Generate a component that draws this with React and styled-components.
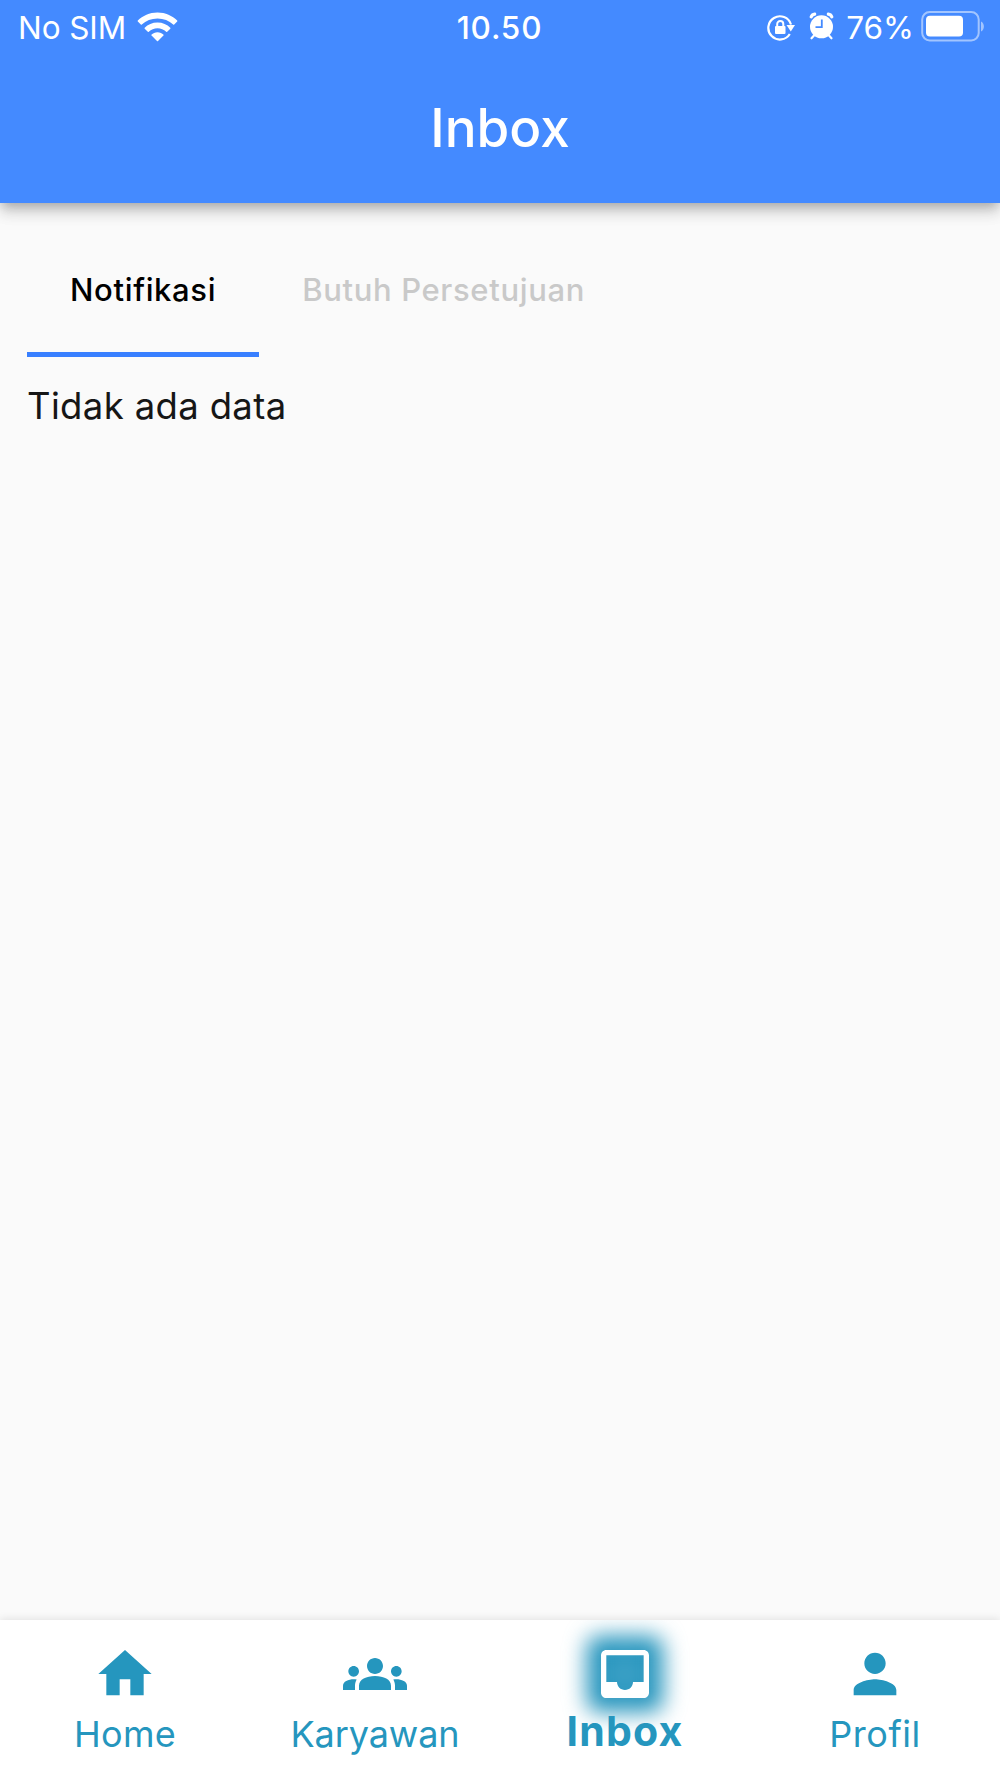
import React, { useState } from "react";
import styled, { createGlobalStyle, css } from "styled-components";

const GlobalStyle = createGlobalStyle`
  * {
    box-sizing: border-box;
  }
  body {
    margin: 0;
    background: #fafafa;
    font-family: Inter, "Liberation Sans", sans-serif;
  }
`;

const Screen = styled.div`
  display: flex;
  flex-direction: column;
  width: 1000px;
  height: 1778px;
  overflow: hidden;
  background: #fafafa;
`;

const Header = styled.header`
  height: 203px;
  background: #448aff;
  color: #fff;
  box-shadow: 0 5px 10px -3px rgba(0, 0, 0, 0.2),
    0 10px 13px 0 rgba(0, 0, 0, 0.12), 0 3px 22px 0 rgba(0, 0, 0, 0.1);
`;

const StatusBar = styled.div`
  display: grid;
  grid-template-columns: 1fr auto 1fr;
  height: 54px;
  padding: 0 16px 0 18px;
  font-size: 31.5px;
  line-height: 55px;
`;

const StatusGroup = styled.div`
  display: flex;
  justify-content: ${({ $end }) => ($end ? "flex-end" : "flex-start")};

  svg {
    display: block;
    flex: none;
  }
`;

const Carrier = styled.span`
  margin-right: 11px;
  letter-spacing: -0.1px;
`;

const WifiIcon = styled.svg`
  margin-top: 12px;
`;

const Clock = styled.span`
  margin-right: 3px;
  font-weight: 550;
  letter-spacing: 0.8px;
`;

const LockIcon = styled.svg`
  margin: 14px 14px 0 0;
`;

const AlarmIcon = styled.svg`
  margin: 12px 12px 0 0;
`;

const Percent = styled.span`
  margin-right: 6px;
`;

const BatteryIcon = styled.svg`
  margin-top: 10px;
`;

const Title = styled.h1`
  margin: 0;
  padding-top: 42px;
  font-size: 53px;
  font-weight: 550;
  line-height: 64px;
  text-align: center;
`;

const Content = styled.main`
  flex: 1;
  padding: 46px 27px 0;
`;

const Tabs = styled.div`
  display: flex;
`;

const Tab = styled.button`
  height: 108px;
  padding: 0 43px 22px;
  border: 0;
  border-bottom: 5px solid transparent;
  background: none;
  color: #c9c9c9;
  font-family: inherit;
  font-size: 31px;
  font-weight: 500;
  line-height: 40px;
  letter-spacing: 0.65px;
  white-space: nowrap;

  ${({ $active }) =>
    $active &&
    css`
      color: #000;
      border-bottom-color: #387fff;
    `}
`;

const EmptyText = styled.p`
  margin: 0;
  padding-top: 26px;
  color: #161616;
  font-size: 36.5px;
  line-height: 46px;
  letter-spacing: 0.35px;
`;

const BottomNav = styled.nav`
  display: grid;
  grid-template-columns: repeat(4, 1fr);
  height: 158px;
  overflow: hidden;
  background: #fff;
  box-shadow: 0 -1px 8px rgba(0, 0, 0, 0.1);
`;

const NavItem = styled.button`
  display: flex;
  flex-direction: column;
  align-items: center;
  padding: 22px 0 0;
  border: 0;
  background: none;
  color: #2596be;
  font-family: inherit;
`;

const IconWrap = styled.span`
  position: relative;
  width: 64px;
  height: 64px;

  ${({ $active }) =>
    $active &&
    css`
      color: #fff;

      &::before {
        content: "";
        position: absolute;
        inset: -6px;
        border-radius: 12px;
        background: radial-gradient(circle, #4ba8cc 0%, #2092bb 55%);
        filter: blur(11px);
      }
    `}
`;

const NavIcon = styled.svg`
  position: relative;
  display: block;
  width: 64px;
  height: 64px;
  fill: currentColor;
`;

const NavLabel = styled.span`
  position: relative;
  margin-top: 6px;
  font-size: 36px;
  font-weight: 400;
  line-height: 44px;
  letter-spacing: ${({ $spacing }) => $spacing};

  ${({ $active }) =>
    $active &&
    css`
      margin-top: 3px;
      font-size: 41px;
      font-weight: 700;
    `}
`;

const tabs = ["Notifikasi", "Butuh Persetujuan"];

const navItems = [
  {
    label: "Home",
    spacing: "0.3px",
    path: "M10 20v-6h4v6h5v-8h3L12 3 2 12h3v8z",
  },
  {
    label: "Karyawan",
    spacing: "-0.1px",
    path: "M12 12.75c1.63 0 3.07.39 4.24.9 1.08.48 1.76 1.56 1.76 2.73V18H6v-1.61c0-1.18.68-2.26 1.76-2.73 1.17-.52 2.61-.91 4.24-.91zM4 13c1.1 0 2-.9 2-2s-.9-2-2-2-2 .9-2 2 .9 2 2 2zm1.13 1.1C4.76 14.04 4.39 14 4 14c-.99 0-1.93.21-2.78.58C.48 14.9 0 15.62 0 16.43V18h4.5v-1.61c0-.83.23-1.61.63-2.29zM20 13c1.1 0 2-.9 2-2s-.9-2-2-2-2 .9-2 2 .9 2 2 2zm4 3.43c0-.81-.48-1.53-1.22-1.85-.85-.37-1.79-.58-2.78-.58-.39 0-.76.04-1.13.1.4.68.63 1.46.63 2.29V18H24v-1.57zM12 6c1.66 0 3 1.34 3 3s-1.34 3-3 3-3-1.34-3-3 1.34-3 3-3z",
  },
  {
    label: "Inbox",
    spacing: "1.2px",
    path: "M19 3H4.99c-1.11 0-1.98.89-1.98 2L3 19c0 1.1.88 2 1.99 2H19c1.1 0 2-.9 2-2V5c0-1.11-.9-2-2-2zm0 12h-4c0 1.66-1.35 3-3 3s-3-1.34-3-3H4.99V5H19v10z",
  },
  {
    label: "Profil",
    spacing: "0.5px",
    path: "M12 12c2.21 0 4-1.79 4-4s-1.79-4-4-4-4 1.79-4 4 1.79 4 4 4zm0 2c-2.67 0-8 1.34-8 4v2h16v-2c0-2.66-5.33-4-8-4z",
  },
];

const Status = () => (
  <StatusBar>
    <StatusGroup>
      <Carrier>No SIM</Carrier>
      <WifiIcon width="41" height="30" viewBox="0 0 41 30" fill="#fff">
        <path d="M20.5 .5C28.500 .5 35.300 3.700 40.200 8.600Q40.600 9.100 40.200 9.600L37.200 12.600Q36.700 13 36.200 12.600C32 8.600 26.700 6.400 20.500 6.400S9 8.600 4.800 12.600Q4.300 13 3.800 12.600L.8 9.600Q.4 9.100 .8 8.600C5.700 3.700 12.500 .5 20.500 .5Z" />
        <path d="M20.500 10.500C25.700 10.500 30.100 12.500 33.300 15.700Q33.700 16.200 33.300 16.700L30.200 19.700Q29.700 20.100 29.200 19.700C26.800 17.500 23.900 16.300 20.500 16.300S14.200 17.500 11.800 19.700Q11.300 20.100 10.800 19.700L7.700 16.700Q7.300 16.200 7.700 15.700C10.900 12.500 15.300 10.500 20.500 10.500Z" />
        <path d="M20.500 20.200C23 20.200 25 21.200 26.400 22.600Q26.800 23.100 26.400 23.600L21 29Q20.500 29.500 20 29L14.600 23.600Q14.200 23.100 14.600 22.600C16 21.200 18 20.200 20.500 20.200Z" />
      </WifiIcon>
    </StatusGroup>
    <Clock>10.50</Clock>
    <StatusGroup $end>
      <LockIcon width="28" height="28" viewBox="0 0 28 28" fill="none">
        <path
          d="M22.800 20A11.600 11.600 0 1 1 24 10.500"
          stroke="#fff"
          strokeWidth="2.200"
        />
        <path d="M19.500 11H28L23.800 17.500Z" fill="#fff" />
        <rect x="8" y="12" width="10.500" height="8" rx="1" fill="#fff" />
        <path
          d="M10.200 12.500V10a3.050 3.050 0 0 1 6.100 0V12.500"
          stroke="#fff"
          strokeWidth="2"
        />
      </LockIcon>
      <AlarmIcon width="25" height="28" viewBox="0 0 25 28" fill="#fff">
        <circle cx="12.500" cy="14.800" r="11.500" />
        <path
          d="M2.200 4.800Q3.200 2.500 5.700 2.200M22.800 4.800Q21.800 2.500 19.300 2.200"
          fill="none"
          stroke="#fff"
          strokeWidth="3.200"
          strokeLinecap="round"
        />
        <path
          d="M5 23.500L2.500 26.300M20 23.500L22.500 26.300"
          stroke="#fff"
          strokeWidth="2.200"
          strokeLinecap="round"
        />
        <path
          d="M12.800 7.500V15.200H6.500"
          fill="none"
          stroke="#448aff"
          strokeWidth="1.800"
        />
      </AlarmIcon>
      <Percent>76%</Percent>
      <BatteryIcon width="64" height="32" viewBox="0 0 64 32">
        <rect
          x="2.200"
          y="2"
          width="56.500"
          height="28.500"
          rx="7.500"
          fill="none"
          stroke="#fff"
          strokeOpacity=".5"
          strokeWidth="2"
        />
        <rect x="6" y="5.700" width="37" height="20.800" rx="4" fill="#fff" />
        <path
          d="M61 11.500c3.800 1.500 3.800 8.500 0 10Z"
          fill="#fff"
          fillOpacity=".5"
        />
      </BatteryIcon>
    </StatusGroup>
  </StatusBar>
);

const App = () => {
  const [activeTab, setActiveTab] = useState("Notifikasi");
  const [page, setPage] = useState("Inbox");

  return (
    <Screen>
      <GlobalStyle />
      <Header>
        <Status />
        <Title>Inbox</Title>
      </Header>
      <Content>
        <Tabs>
          {tabs.map((tab) => (
            <Tab
              key={tab}
              $active={tab === activeTab}
              onClick={() => setActiveTab(tab)}
            >
              {tab}
            </Tab>
          ))}
        </Tabs>
        <EmptyText>Tidak ada data</EmptyText>
      </Content>
      <BottomNav>
        {navItems.map(({ label, spacing, path }) => (
          <NavItem key={label} onClick={() => setPage(label)}>
            <IconWrap $active={label === page}>
              <NavIcon viewBox="0 0 24 24">
                <path d={path} />
              </NavIcon>
            </IconWrap>
            <NavLabel $active={label === page} $spacing={spacing}>
              {label}
            </NavLabel>
          </NavItem>
        ))}
      </BottomNav>
    </Screen>
  );
};

export default App;
